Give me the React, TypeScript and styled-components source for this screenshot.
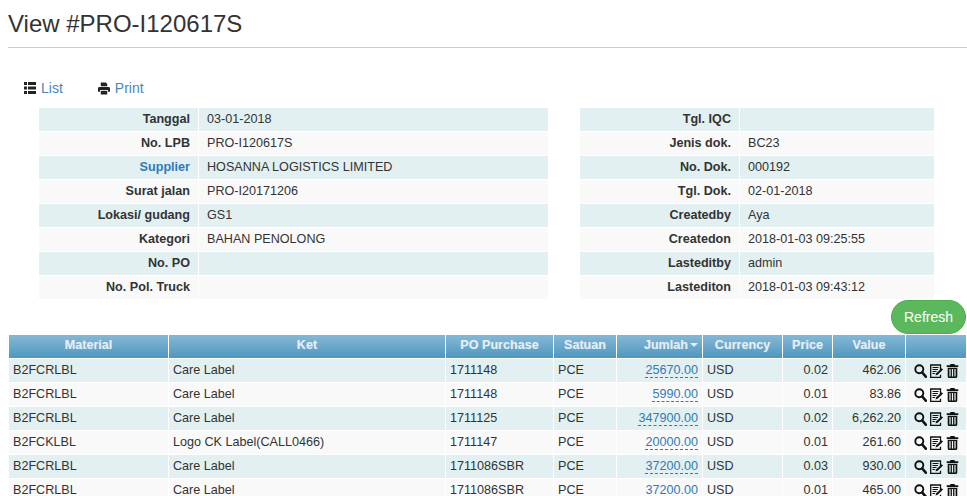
import React from "react";
import styled, { createGlobalStyle } from "styled-components";

const Global = createGlobalStyle`
  html, body { margin: 0; padding: 0; background: #fff; overflow: hidden; }
  body { font-family: "Liberation Sans", Arial, sans-serif; font-size: 12.6px; color: #333; }
`;
const Page = styled.div`width: 967px; height: 496px; overflow: hidden; padding-left: 8px; box-sizing: border-box;`;
const Title = styled.h1`
  margin: 0; height: 48px; box-sizing: border-box; padding-top: 10px; font-size: 24px; line-height: 28px;
  font-weight: 400; color: #333; border-bottom: 1px solid #ccc;
`;
const Toolbar = styled.div`display: flex; gap: 35px; padding: 32px 0 12px 16px; height: 16px; align-items: center;`;
const ToolLink = styled.a`display: flex; align-items: center; gap: 5px; font-size: 14px; line-height: 16px; color: #4a85bd;`;
const InfoRow = styled.div`display: flex; gap: 32px; padding: 0 0 0 31px;`;
const InfoTable = styled.table<{ $w: number }>`
  width: ${(p) => p.$w}px; table-layout: fixed; border-collapse: separate; border-spacing: 0;
  & col:first-child { width: 160px; }
`;
const InfoTr = styled.tr`
  background: #f9f9f9;
  &:nth-child(odd) { background: #e2f0f1; }
`;
const Label = styled.th<{ $link?: boolean }>`
  height: 24px; padding: 0 8px 2px 0; box-sizing: border-box; text-align: right; font-weight: 700; font-size: 12.6px;
  border-right: 1px solid #fff; border-bottom: 1px solid #fff; color: ${(p) => (p.$link ? "#337ab7" : "#333")};
`;
const Value = styled.td`
  height: 24px; padding: 0 0 2px 8px; box-sizing: border-box; border-bottom: 1px solid #fff;
`;
const RefreshRow = styled.div`display: flex; justify-content: flex-end; padding: 0 1px 1px 0;`;
const RefreshButton = styled.button`
  width: 75px; height: 34px; border-radius: 17px; border: 1px solid #4cae4c; background: #5cb85c; color: #fff;
  font: 400 14px/1 "Liberation Sans", Arial, sans-serif; padding: 0 0 1px;
`;
const DataTable = styled.table`
  margin: 0 0 0 1px; width: 957px; table-layout: fixed; border-collapse: separate; border-spacing: 0;
`;
const Head = styled.th<{ $right?: boolean }>`
  height: 24px; padding: 0 ${(p) => (p.$right ? "4px" : "0")} 3px 0; box-sizing: border-box; border-right: 1px solid #fff; border-bottom: 1px solid #fff;
  font-size: 12.6px; font-weight: 700;
  color: #e4eef4; background: linear-gradient(#86b8d5, #4f97c0); text-align: ${(p) => (p.$right ? "right" : "center")};
  text-shadow: 0 0 1px rgba(255,255,255,.35);
  &:last-child { border-right: 0; }
`;
const Caret = styled.span`
  display: inline-block; margin-left: 2px; vertical-align: 2px; border-top: 4px solid #e4eef4; border-left: 4px solid transparent; border-right: 4px solid transparent;
`;
const Row = styled.tr`
  background: #f9f9f9;
  &:nth-child(odd) { background: #e2f0f1; }
`;
const Cell = styled.td<{ $right?: boolean }>`
  height: 24px; padding: 0 4px 2px; box-sizing: border-box; border-right: 1px solid #fff; border-bottom: 1px solid #fff; white-space: nowrap; overflow: hidden;
  text-align: ${(p) => (p.$right ? "right" : "left")};
  &:last-child { border-right: 0; padding: 0; }
`;
const Editable = styled.a`color: #337ab7; border-bottom: 1px dashed #337ab7;`;
const Actions = styled.div`display: flex; gap: 3px; padding: 1px 0 0 8px; height: 23px; align-items: center; box-sizing: border-box;`;

const ListIcon = () => (
  <svg width="12" height="12" viewBox="0 0 12 12" fill="#222">
    <rect x="0" y="0" width="3" height="3" /><rect x="4" y="0" width="8" height="3" />
    <rect x="0" y="4.5" width="3" height="3" /><rect x="4" y="4.5" width="8" height="3" />
    <rect x="0" y="9" width="3" height="3" /><rect x="4" y="9" width="8" height="3" />
  </svg>
);
const PrintIcon = () => (
  <svg width="12" height="13" viewBox="0 0 13 13" fill="#222">
    <path d="M3 0h5.5L10 1.5V4H3z" />
    <path d="M1.5 4.8h10c.8 0 1.5.7 1.5 1.5V10h-2.2V8H2.2v2H0V6.3c0-.8.7-1.5 1.5-1.5z" />
    <rect x="3" y="9" width="7" height="4" />
  </svg>
);
const SearchIcon = () => (
  <svg width="13" height="14" viewBox="0 0 13 14" fill="none" stroke="#111">
    <circle cx="5.3" cy="5.3" r="4" strokeWidth="1.9" />
    <path d="M8.2 8.5l3.6 4.2" strokeWidth="2.6" strokeLinecap="round" />
  </svg>
);
const EditIcon = () => (
  <svg width="13" height="14" viewBox="0 0 13 14" fill="none" stroke="#111">
    <path d="M10.5 6.5V1H.7v12.3h9.8v-2.5" strokeWidth="1.3" />
    <path d="M2.5 3.5h6M2.5 5.5h5.5M2.5 7.5h4M2.5 9.5h2.5" strokeWidth="1.1" />
    <path d="M5.5 11.5l.7-2.3 5.5-5 1.3 1.4-5.3 5.2z" fill="#111" stroke="none" />
  </svg>
);
const TrashIcon = () => (
  <svg width="13" height="14" viewBox="0 0 13 14" fill="#111">
    <path d="M4.5 0h4l.5 1.3h3.3V3H.7V1.3H4z" />
    <path d="M1.7 3.8h9.6v8.7c0 .8-.6 1.5-1.4 1.5H3.1c-.8 0-1.4-.7-1.4-1.5zM3.4 5v7.5h1.2V5zm2.5 0v7.5h1.2V5zm2.5 0v7.5h1.2V5z" fillRule="evenodd" />
  </svg>
);

const left: [string, string, boolean?][] = [
  ["Tanggal", "03-01-2018"], ["No. LPB", "PRO-I120617S"], ["Supplier", "HOSANNA LOGISTICS LIMITED", true],
  ["Surat jalan", "PRO-I20171206"], ["Lokasi/ gudang", "GS1"], ["Kategori", "BAHAN PENOLONG"], ["No. PO", ""], ["No. Pol. Truck", ""],
];
const right: [string, string][] = [
  ["Tgl. IQC", ""], ["Jenis dok.", "BC23"], ["No. Dok.", "000192"], ["Tgl. Dok.", "02-01-2018"],
  ["Createdby", "Aya"], ["Createdon", "2018-01-03 09:25:55"], ["Lasteditby", "admin"], ["Lastediton", "2018-01-03 09:43:12"],
];
const rows = [
  ["B2FCRLBL", "Care Label", "1711148", "25670.00", "0.02", "462.06"],
  ["B2FCRLBL", "Care Label", "1711148", "5990.00", "0.01", "83.86"],
  ["B2FCRLBL", "Care Label", "1711125", "347900.00", "0.02", "6,262.20"],
  ["B2FCKLBL", "Logo CK Label(CALL0466)", "1711147", "20000.00", "0.01", "261.60"],
  ["B2FCRLBL", "Care Label", "1711086SBR", "37200.00", "0.03", "930.00"],
  ["B2FCRLBL", "Care Label", "1711086SBR", "37200.00", "0.01", "465.00"],
];
const widths = [160, 277, 108, 63, 86, 80, 50, 73, 60];
const heads = ["Material", "Ket", "PO Purchase", "Satuan", "Jumlah", "Currency", "Price", "Value", ""];

const Info = ({ data, w }: { data: [string, string, boolean?][]; w: number }) => (
  <InfoTable $w={w}>
    <colgroup><col /><col /></colgroup>
    <tbody>
      {data.map(([k, v, link]) => (
        <InfoTr key={k}><Label $link={link}>{k}</Label><Value>{v}</Value></InfoTr>
      ))}
    </tbody>
  </InfoTable>
);

export default function App() {
  return (
    <Page>
      <Global />
      <Title>View #PRO-I120617S</Title>
      <Toolbar>
        <ToolLink><ListIcon />List</ToolLink>
        <ToolLink><PrintIcon />Print</ToolLink>
      </Toolbar>
      <InfoRow>
        <Info data={left} w={509} />
        <Info data={right} w={354} />
      </InfoRow>
      <RefreshRow><RefreshButton>Refresh</RefreshButton></RefreshRow>
      <DataTable>
        <colgroup>{widths.map((w, i) => <col key={i} style={{ width: w }} />)}</colgroup>
        <thead>
          <tr>{heads.map((h, i) => <Head key={i} $right={h === "Jumlah"}>{h}{h === "Jumlah" && <Caret />}</Head>)}</tr>
        </thead>
        <tbody>
          {rows.map((r, i) => (
            <Row key={i}>
              <Cell>{r[0]}</Cell><Cell>{r[1]}</Cell><Cell>{r[2]}</Cell><Cell>PCE</Cell>
              <Cell $right><Editable>{r[3]}</Editable></Cell>
              <Cell>USD</Cell><Cell $right>{r[4]}</Cell><Cell $right>{r[5]}</Cell>
              <Cell><Actions><SearchIcon /><EditIcon /><TrashIcon /></Actions></Cell>
            </Row>
          ))}
        </tbody>
      </DataTable>
    </Page>
  );
}
